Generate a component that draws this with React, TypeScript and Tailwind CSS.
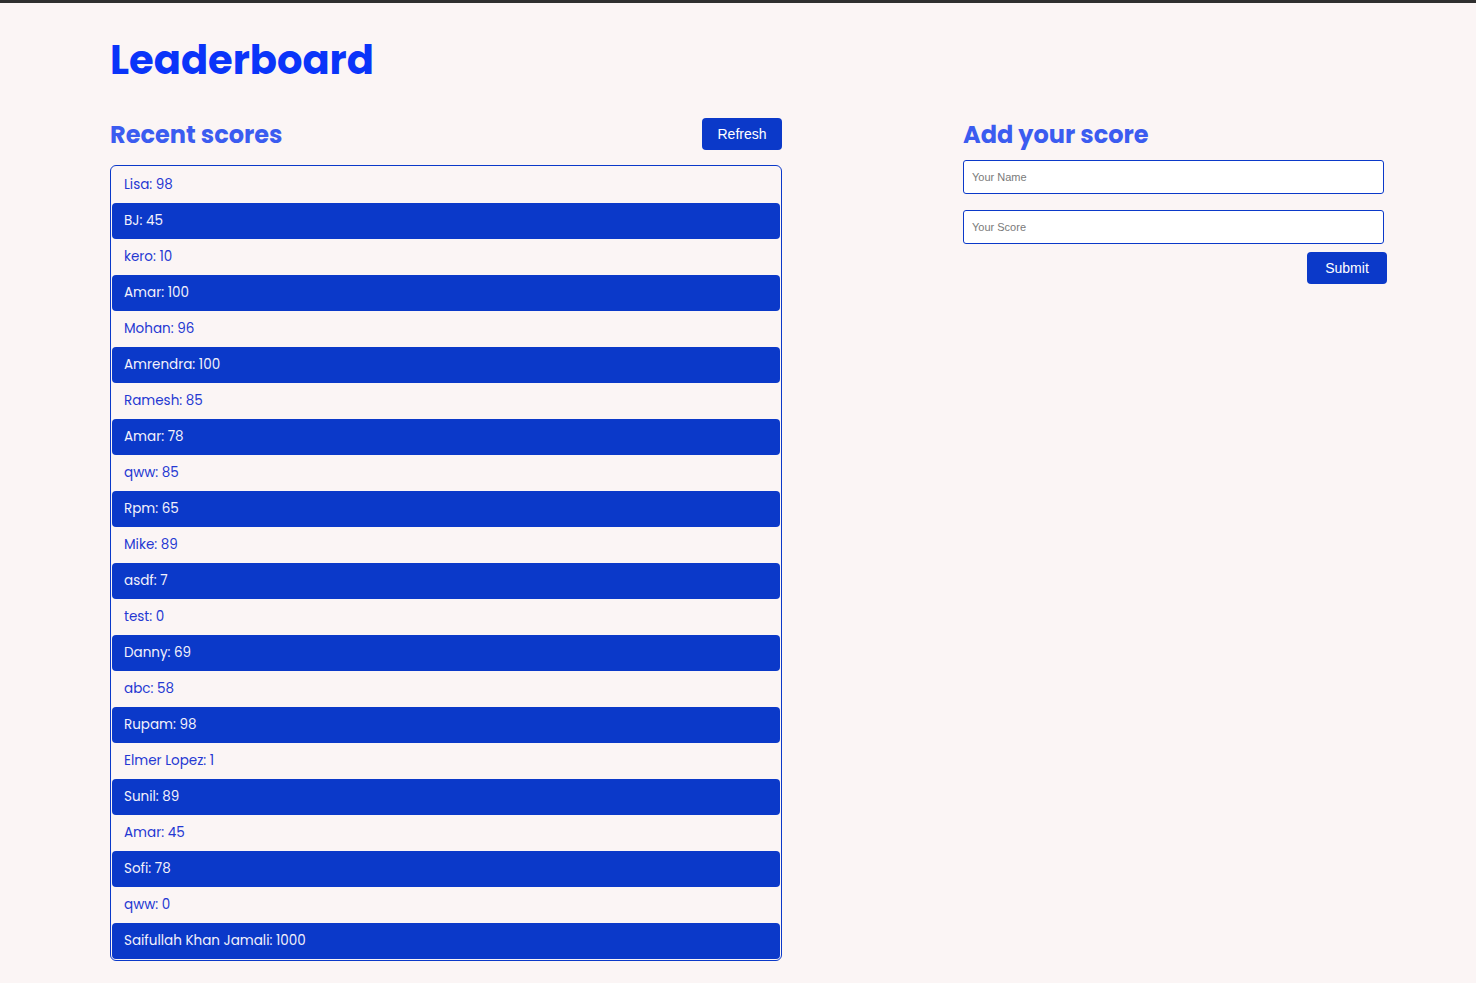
const scores: [string, number][] = [
  ['Lisa', 98],
  ['BJ', 45],
  ['kero', 10],
  ['Amar', 100],
  ['Mohan', 96],
  ['Amrendra', 100],
  ['Ramesh', 85],
  ['Amar', 78],
  ['qww', 85],
  ['Rpm', 65],
  ['Mike', 89],
  ['asdf', 7],
  ['test', 0],
  ['Danny', 69],
  ['abc', 58],
  ['Rupam', 98],
  ['Elmer Lopez', 1],
  ['Sunil', 89],
  ['Amar', 45],
  ['Sofi', 78],
  ['qww', 0],
  ['Saifullah Khan Jamali', 1000],
]

export default function App() {
  return (
    <div className="min-h-screen bg-[#fbf5f5] border-t-[3px] border-[#2f2f2f] font-['Poppins','Open_Sans',sans-serif]">
      <div className="pl-[110px] pt-[33px]">
        <h1 className="text-[40px] leading-[48px] font-bold text-[#0a34f9]">Leaderboard</h1>

        <div className="flex items-start mt-[34px]">
          <section className="w-[672px]">
            <div className="flex items-center justify-between h-[32px] mb-[15px]">
              <h2 className="text-[24px] font-bold text-[#3b5cf0] pt-[2px]">Recent scores</h2>
              <button className="w-[80px] h-[32px] rounded-[4px] bg-[#0b39c9] text-[14px] text-white font-['Liberation_Sans',Arial,sans-serif]">
                Refresh
              </button>
            </div>
            <ul className="border border-[#0b39c9] rounded-[6px] p-px">
              {scores.map(([name, score], i) => (
                <li
                  key={i}
                  className={
                    i % 2 === 1
                      ? 'h-[36px] flex items-center px-[12px] text-[13.5px] rounded-[4px] bg-[#0b39c9] text-[#f3f1fb]'
                      : 'h-[36px] flex items-center px-[12px] text-[13.5px] text-[#2538d2]'
                  }
                >
                  {name}: {score}
                </li>
              ))}
            </ul>
          </section>

          <section className="ml-[181px] w-[424px]">
            <div className="flex items-center h-[32px]">
              <h2 className="text-[24px] font-bold text-[#3b5cf0] pt-[2px]">Add your score</h2>
            </div>
            <form className="mt-[10px] flex flex-col" onSubmit={(e) => e.preventDefault()}>
              <input
                type="text"
                placeholder="Your Name"
                className="w-[421px] h-[34px] bg-white border border-[#0b39c9] rounded-[3px] px-[8px] text-[11px] font-['Liberation_Sans',Arial,sans-serif] placeholder:text-[#7a7a7a] outline-none"
              />
              <input
                type="text"
                placeholder="Your Score"
                className="mt-[16px] w-[421px] h-[34px] bg-white border border-[#0b39c9] rounded-[3px] px-[8px] text-[11px] font-['Liberation_Sans',Arial,sans-serif] placeholder:text-[#7a7a7a] outline-none"
              />
              <div className="flex justify-end mt-[8px]">
                <button
                  type="submit"
                  className="w-[80px] h-[32px] rounded-[4px] bg-[#0b39c9] text-[14px] text-white font-['Liberation_Sans',Arial,sans-serif]"
                >
                  Submit
                </button>
              </div>
            </form>
          </section>
        </div>
      </div>
    </div>
  )
}
